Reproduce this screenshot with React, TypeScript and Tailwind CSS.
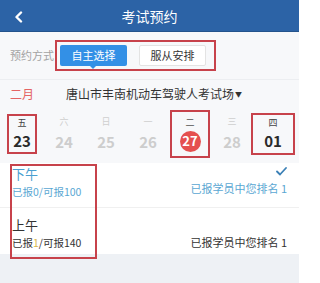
import React from 'react';

const days = [
  { w: '五', d: '23', kind: 'boxed' },
  { w: '六', d: '24', kind: 'off' },
  { w: '日', d: '25', kind: 'off' },
  { w: '一', d: '26', kind: 'off' },
  { w: '二', d: '27', kind: 'active' },
  { w: '三', d: '28', kind: 'off' },
  { w: '四', d: '01', kind: 'boxed2' },
];

const font = { fontFamily: '"Noto Sans CJK SC", "Noto Sans", sans-serif' };

const DayCell = ({ w, d, kind }: { w: string; d: string; kind: string }) => {
  if (kind === 'off') {
    return (
      <div className="flex flex-col items-center justify-center h-full">
        <span className="text-[9px] leading-[12px] text-[#cfcfcf]">{w}</span>
        <span className="text-[15px] leading-[22px] font-semibold text-[#cdcdcd] mt-[3px]">{d}</span>
      </div>
    );
  }
  if (kind === 'active') {
    return (
      <div className="flex justify-center items-center h-full">
        <div className="w-[40px] h-[48px] border-2 border-[#c7424b] flex flex-col items-center justify-center">
          <span className="text-[9px] leading-[12px] text-[#555]">{w}</span>
          <span className="mt-[2px] w-[21px] h-[21px] rounded-full bg-[#e5504f] text-white text-[13px] font-bold flex items-center justify-center">
            {d}
          </span>
        </div>
      </div>
    );
  }
  const box = kind === 'boxed' ? 'w-[30px] h-[40px]' : 'w-[45px] h-[42px] ml-[-2px]';
  return (
    <div className="flex justify-center items-center h-full">
      <div className={`${box} border-2 border-[#c7424b] flex flex-col items-center justify-center`}>
        <span className="text-[9px] leading-[12px] text-[#444]">{w}</span>
        <span className="text-[15px] leading-[20px] font-semibold text-[#2a2a2a] mt-[2px]">{d}</span>
      </div>
    </div>
  );
};

export default function App() {
  return (
    <div className="w-[299px] h-[283px] overflow-hidden bg-[#eef1f5] relative" style={font}>
      {/* header */}
      <div className="h-[32px] bg-[#2c63a6] border-b border-[#24538c] flex items-center relative">
        <svg className="absolute left-[14px] top-[11px]" width="9" height="12" viewBox="0 0 9 12">
          <path d="M7 1.5 L2.5 6 L7 10.5" fill="none" stroke="#fff" strokeWidth="2.4" strokeLinecap="round" strokeLinejoin="round" />
        </svg>
        <span className="w-full text-center text-white text-[14px] leading-none">考试预约</span>
      </div>

      <div className="bg-[#f7f8fa]">
        {/* booking mode */}
        <div className="h-[48px] flex items-center pl-[10px] border-b border-[#eceef1]">
          <span className="text-[11px] text-[#a3a3a3]">预约方式</span>
          <div className="ml-[1px] w-[161px] h-[31px] border-2 border-[#c7424b] flex items-center pl-[3px] gap-[12px]">
            <div className="relative w-[67px] h-[21px] bg-[#3390e6] rounded-[2px] flex items-center justify-center text-white text-[11px]">
              自主选择
              <span className="absolute bottom-[-3px] left-[30px] w-0 h-0 border-l-[3px] border-r-[3px] border-t-[3px] border-l-transparent border-r-transparent border-t-[#3390e6]" />
            </div>
            <div className="w-[67px] h-[21px] bg-white border border-[#e3e3e3] rounded-[2px] flex items-center justify-center text-[#333] text-[11px]">
              服从安排
            </div>
          </div>
        </div>

        {/* month + place */}
        <div className="h-[28px] flex items-center pl-[10px]">
          <span className="text-[12px] text-[#e46464] w-[56px]">二月</span>
          <span className="text-[12px] text-[#333]">唐山市丰南机动车驾驶人考试场</span>
          <span className="text-[7px] text-[#333] ml-[1px]">▼</span>
        </div>

        {/* dates */}
        <div className="h-[52px] grid grid-cols-7 w-[294px] ml-[1px]">
          {days.map((x) => (
            <DayCell key={x.d} {...x} />
          ))}
        </div>
        <div className="h-[3px]" />
      </div>

      {/* sessions */}
      <div className="bg-white relative">
        <div className="h-[45px] flex justify-between pl-[12px] pr-[12px] border-b border-[#f0f0f0] relative">
          <div className="flex flex-col pt-[2px]">
            <span className="text-[13px] leading-[18px] text-[#4a9fd0]">下午</span>
            <span className="text-[10.5px] leading-[16px] text-[#5aa7d3] mt-[1px]">已报0/可报100</span>
          </div>
          <div className="flex flex-col items-end pt-[4px]">
            <svg width="11" height="9" viewBox="0 0 11 9" className="mr-[0px]">
              <path d="M1 4.5 L4 7.5 L10 1" fill="none" stroke="#3b80b6" strokeWidth="1.8" strokeLinecap="round" strokeLinejoin="round" />
            </svg>
            <span className="text-[11px] leading-[16px] text-[#5aa7d3] mt-[4px]">已报学员中您排名 1</span>
          </div>
        </div>
        <div className="h-[46px] flex justify-between pl-[12px] pr-[12px]">
          <div className="flex flex-col pt-[8px]">
            <span className="text-[13px] leading-[18px] text-[#333]">上午</span>
            <span className="text-[10.5px] leading-[16px] text-[#333] mt-[1px]">
              已报<span className="text-[#d9b84a]">1</span>/可报140
            </span>
          </div>
          <div className="flex flex-col justify-end pb-[4px]">
            <span className="text-[11px] leading-[16px] text-[#333]">已报学员中您排名 1</span>
          </div>
        </div>
        {/* annotation box */}
        <div className="absolute left-[10px] top-[1px] w-[87px] h-[95px] border-2 border-[#c7424b] pointer-events-none" />
      </div>
    </div>
  );
}
